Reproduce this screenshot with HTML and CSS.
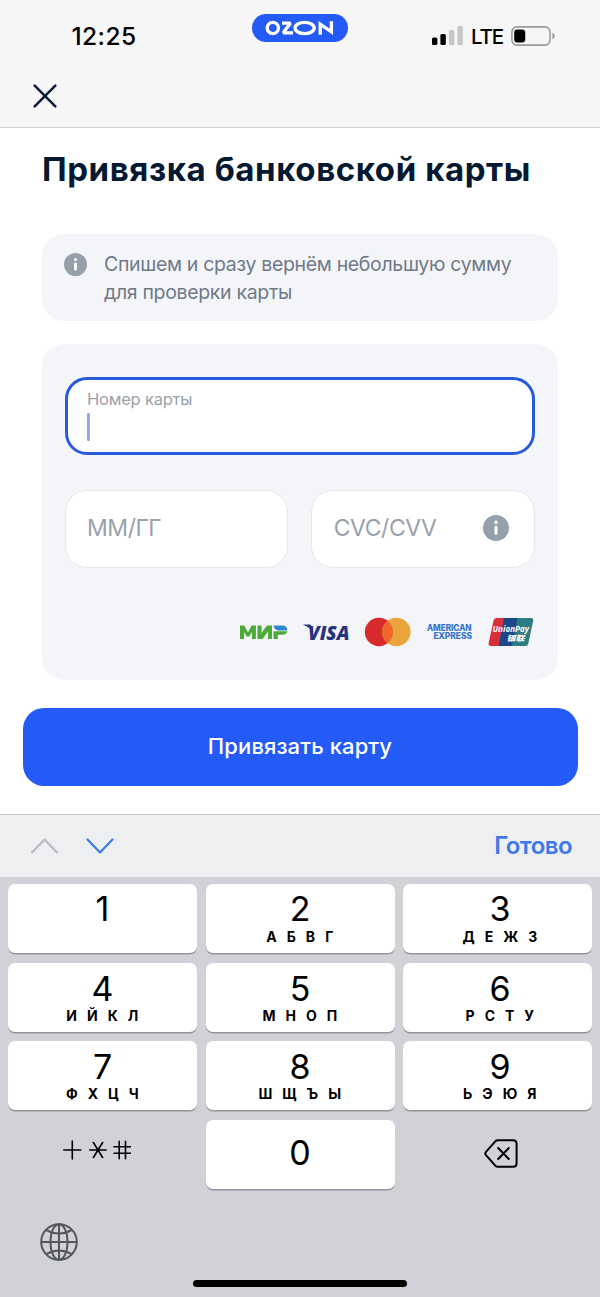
FILE: index.html
```html
<!DOCTYPE html>
<html lang="ru">
<head>
<meta charset="utf-8">
<title>Привязка банковской карты</title>
<link rel="stylesheet" href="styles.css">
</head>
<body>
<div class="screen">
  <header class="header">
    <div class="status">
      <div class="clock">12:25</div>
      <div class="pill">
        <svg width="70" height="16" viewBox="0 0 70 16" aria-label="OZON">
          <g fill="none" stroke="#fff" stroke-width="3.3">
            <circle cx="7.800" cy="8" r="5.6"/>
            <path d="M17 3.200h8.4L18.2 12.8h9.8" stroke-linejoin="bevel"/>
            <ellipse cx="39.6" cy="8" rx="9.6" ry="5.7"/>
            <path d="M55.2 14.8V4.2L66.400 11.800V1.200"/>
          </g>
        </svg>
      </div>
      <div class="indicators">
        <svg class="signal" width="31" height="20" viewBox="0 0 31 20">
          <rect x="0" y="11.5" width="5.4" height="7.5" rx="1.5"/>
          <rect x="8.4" y="8" width="5.4" height="11" rx="1.5"/>
          <rect x="17" y="4" width="5.4" height="15" rx="1.5" fill="#c6c6c6"/>
          <rect x="25.4" y="0" width="5.4" height="19" rx="1.5" fill="#c6c6c6"/>
        </svg>
        <span class="network">LTE</span>
        <svg class="battery" width="44" height="20" viewBox="0 0 44 20">
          <rect x=".9" y=".9" width="38.2" height="18.2" rx="5.2" fill="none" stroke="#9c9c9c" stroke-width="1.6"/>
          <rect x="3.2" y="3.4" width="11" height="13.2" rx="3"/>
          <path d="M41.4 6.8q2.4.8 2.4 3.2t-2.4 3.2z" fill="#9c9c9c"/>
        </svg>
      </div>
    </div>
    <svg class="close" width="24" height="24" viewBox="0 0 24 24"><path d="M1.7 1.7l20.6 20.6M22.3 1.7L1.7 22.3" stroke="#08183a" stroke-width="2.5" stroke-linecap="round"/></svg>
  </header>

  <main class="content">
    <h1 class="title">Привязка банковской карты</h1>
    <section class="notice">
      <svg class="info" width="23" height="23" viewBox="0 0 26 26"><circle cx="13" cy="13" r="13" fill="#979fab"/><circle cx="13" cy="7.3" r="1.7" fill="#fff"/><rect x="11.3" y="10.8" width="3.400" height="9" rx="1.2" fill="#fff"/></svg>
      <p class="notice-text">Спишем и сразу вернём небольшую сумму<br>для проверки карты</p>
    </section>
    <section class="card-form">
      <div class="field field-active">
        <span class="field-label">Номер карты</span>
        <span class="caret"></span>
      </div>
      <div class="field-row">
        <div class="field"><span class="placeholder">ММ/ГГ</span></div>
        <div class="field"><span class="placeholder">CVC/CVV</span>
          <svg width="26" height="26" viewBox="0 0 26 26"><circle cx="13" cy="13" r="13" fill="#979fab"/><circle cx="13" cy="7.3" r="1.7" fill="#fff"/><rect x="11.5" y="10.8" width="3" height="9" rx="1.2" fill="#fff"/></svg>
        </div>
      </div>
      <div class="brands">
        <svg width="48" height="14" viewBox="0 0 48 14" aria-label="МИР">
          <g fill="#4caa37">
            <path d="M0 14V.5h4.2L8 7.3 11.7.5h4.2V14h-4V6.8L9.4 11.5H6.5L4 6.8V14z"/>
            <path d="M17.500 14V.5h4V8L27 .5H32V14h-4V6.5L22.5 14z"/>
            <path d="M33.500 6.2V14h4.300v-4.200h4.600q4 0 5-3.600z"/>
          </g>
          <path d="M33.500.5H42.500q4.500.2 4.700 4.400v.6H38.5Q34.3 5.2 33.500.5z" fill="#2e85d0"/>
        </svg>
        <svg class="brand-text" width="46" height="18" viewBox="0 0 46 18"><text x="5" y="16.500" textLength="41.500" lengthAdjust="spacingAndGlyphs" class="visa">VISA</text><path d="M.5 1.500h6.2q1.5.2 1.9 1.8l1.4 6.4Q6.9 4.1.5 2.1z" fill="#27337e"/></svg>
        <svg width="48" height="30" viewBox="0 0 48 30"><circle cx="15" cy="15" r="14.2" fill="#d92b2b"/><circle cx="32.4" cy="15" r="14.2" fill="#eaa43d"/><path d="M23.7 3.8a14.2 14.2 0 0 1 0 22.4a14.2 14.2 0 0 1 0-22.4z" fill="#f0672c"/></svg>
        <svg width="46" height="18" viewBox="0 0 46 18" class="amex brand-text"><text x="0" y="7.600" textLength="44.500" lengthAdjust="spacingAndGlyphs">AMERICAN</text><text x="6.500" y="16.200" textLength="38.5" lengthAdjust="spacingAndGlyphs">EXPRESS</text></svg>
        <svg class="brand-text" width="46" height="30" viewBox="0 0 46 30">
          <path d="M8.5 1H19l-5.5 28H3Q0 29 .7 26L5.5 3.5Q6.2 1 8.5 1z" fill="#d8303b"/>
          <path d="M24.500 1H43q2.8 0 2.2 2.7L40.3 26.5Q39.7 29 37.2 29H20z" fill="#2c7c80"/>
          <path d="M16 1h13.500L24 29H10.500z" fill="#1d478b"/>
          <text x="4.5" y="14.500" textLength="36.500" lengthAdjust="spacingAndGlyphs" class="union-name">UnionPay</text>
          <text x="18.500" y="24" textLength="18" lengthAdjust="spacingAndGlyphs" class="union-cn">银联</text>
        </svg>
      </div>
    </section>
  </main>
  <div class="action"><button class="submit">Привязать карту</button></div>

  <div class="accessory">
    <svg width="84" height="18" viewBox="0 0 84 18" fill="none" stroke-width="2.2" stroke-linecap="round" stroke-linejoin="round"><path d="M2 15.4L14.5 2.6L27 15.4" stroke="#b9babd"/><path d="M57.5 2.6L70 15.4L82.500 2.6" stroke="#3f78e8"/></svg>
    <span class="done">Готово</span>
  </div>
  <div class="keyboard">
    <div class="keys">
      <div class="key"><b>1</b></div>
      <div class="key"><b>2</b><i>А Б В Г</i></div>
      <div class="key right"><b>3</b><i>Д Е Ж З</i></div>
      <div class="key low"><b>4</b><i>И Й К Л</i></div>
      <div class="key low"><b>5</b><i>М Н О П</i></div>
      <div class="key low right"><b>6</b><i>Р С Т У</i></div>
      <div class="key low"><b>7</b><i>Ф Х Ц Ч</i></div>
      <div class="key low"><b>8</b><i>Ш Щ Ъ Ы</i></div>
      <div class="key low right"><b>9</b><i>Ь Э Ю Я</i></div>
      <div class="key plain symbols"><svg width="68" height="20" viewBox="0 0 68 20" fill="none" stroke="#000" stroke-width="1.6" stroke-linecap="round" aria-label="+*#"><path d="M.8 10h17M9.300 1v18M26.800 10h16.400M30.400 2.500l9.200 15M39.600 2.500l-9.200 15M51 6.800h16.500M51 13.200h16.500M56.200 1.200v17.600M62.500 1.200v17.600"/></svg></div>
      <div class="key zero"><b>0</b></div>
      <div class="key plain erase"><svg width="34" height="29" viewBox="0 0 34 29" fill="none" stroke="#000" stroke-width="2" stroke-linecap="round" stroke-linejoin="round"><path d="M14 1.200H29Q32.600 1.200 32.600 4.700V24.300Q32.600 27.800 29 27.800H14Q12.400 27.800 11.300 26.700L2 16.200Q.600 14.500 2 12.800L11.300 2.300Q12.400 1.200 14 1.200zM14.200 9l10.600 11M24.800 9L14.200 20"/></svg></div>
    </div>
    <svg class="globe" width="38" height="38" viewBox="0 0 38 38" fill="none" stroke="#53555a" stroke-width="2"><circle cx="19" cy="19" r="17.800"/><ellipse cx="19" cy="19" rx="8.600" ry="17.800"/><path d="M19 1.200v35.600M1.200 19h35.600M6 6.900q13 7.400 26 0M6 31.100q13-7.400 26 0"/></svg>
    <div class="home"></div>
  </div>
</div>
</body>
</html>
```
FILE: styles.css
```css
* { box-sizing: border-box; }
body { margin: 0; font-family: Inter, "Liberation Sans", sans-serif; background: #fff; }
svg { display: block; flex: none; }
.screen { width: 600px; height: 1297px; display: flex; flex-direction: column; overflow: hidden; }

.header { height: 128px; background: #f6f6f6; border-bottom: 1px solid #cfd0d1; flex: none; }
.status { height: 84px; display: grid; grid-template-columns: 252px 96px 1fr; align-items: start; }
.clock { padding: 22px 0 0 71.500px; font-size: 24.500px; line-height: 29px; font-weight: 500; letter-spacing: .4px; }
.pill { margin-top: 14px; height: 28px; border-radius: 14px; background: #245af5; display: flex; align-items: center; justify-content: center; }
.indicators { display: flex; align-items: center; padding: 25px 0 0 84px; height: 46px; }
.network { font-size: 20.500px; line-height: 22px; font-weight: 500; margin: 2px 0 0 8px; width: 32px; letter-spacing: -1.200px; }
.battery { margin-left: 8px; }
.close { margin-left: 33px; }

.content { padding: 20px 42px 0; height: 580px; flex: none; }
.title { margin: 0; font-size: 33px; line-height: 42px; font-weight: 700; letter-spacing: .58px; color: #051933; white-space: nowrap; }
.notice { margin-top: 44px; height: 87px; border-radius: 22px; background: #f4f5f9; padding: 16px 22px; display: flex; gap: 17px; }
.info { margin-top: 3px; }
.notice-text { margin: 0; font-size: 19.500px; line-height: 28px; letter-spacing: -.33px; color: #6f7988; white-space: nowrap; }
.card-form { margin-top: 23px; height: 336px; border-radius: 22px; background: #f4f5f9; padding: 33px 23px 0 22.500px; }
.field { height: 78px; border: 1px solid #e6e8eb; border-radius: 22px; background: #fff; padding: 0 25px 2px 21.500px; display: flex; align-items: center; justify-content: space-between; }
.field-active { border: 3px solid #285bdc; padding: 9px 19.500px; flex-direction: column; align-items: flex-start; justify-content: flex-start; }
.field-label { font-size: 16.500px; line-height: 20px; letter-spacing: -.22px; color: #9ba1aa; }
.caret { width: 3px; height: 28px; background: #8aacea; margin-top: 4px; border-radius: 1px; }
.field-row { display: grid; grid-template-columns: 1fr 1fr; gap: 23px; margin-top: 34.500px; }
.placeholder { font-size: 23px; line-height: 28px; letter-spacing: -.45px; color: #9aa1aa; }
.brands { display: flex; align-items: center; justify-content: space-between; margin: 48.500px 1.500px 0 175px; height: 32px; }
.brand-text { overflow: visible; }
.visa { font: italic 800 20px "Open Sans", sans-serif; fill: #27337e; }
.amex text { font: 700 8.500px Inter, sans-serif; fill: #336fcb; stroke: #336fcb; stroke-width: .2px; }
.union-name { font: italic 700 8.500px "Open Sans", sans-serif; fill: #fff; }
.union-cn { font: italic 900 7.500px "Noto Sans CJK SC", sans-serif; fill: #fff; }

.action { padding: 0 22.500px; height: 106px; flex: none; }
.submit { width: 100%; height: 78px; border: 0; border-radius: 21px; background: #245af5; color: #fff; font: 500 22px/28px Inter, sans-serif; letter-spacing: .1px; display: flex; align-items: center; justify-content: center; padding: 0 0 2px; }

.accessory { height: 63px; flex: none; background: #eeeff1; border-top: 1px solid #c6c8ca; padding: 0 28px 0 30px; display: flex; align-items: center; justify-content: space-between; }
.done { font-size: 24px; line-height: 30px; font-weight: 600; letter-spacing: -.55px; color: #3f78e8; }
.keyboard { flex: 1; background: #d1d2d8; padding: 7px 8px 0; }
.keys { display: grid; grid-template-columns: repeat(3, 1fr); grid-auto-rows: 69px; gap: 9.670px 8.500px; }
.key { background: #fff; border-radius: 7px; box-shadow: 0 1.500px 0 #93959a; display: flex; flex-direction: column; align-items: center; padding-top: 5px; }
.key b { font-weight: 400; font-size: 34px; line-height: 40px; }
.key i { font-style: normal; font-weight: 700; font-size: 14px; line-height: 16px; letter-spacing: 3.350px; margin-right: -3px; white-space: nowrap; }
.low { padding-top: 6px; }
.low i { margin-top: -1px; }
.right { padding-left: 5px; }
.zero { padding-top: 13px; }
.plain { background: none; box-shadow: none; }
.symbols { padding: 20px 12px 0 0; }
.erase { padding: 19px 0 0 7px; }
.globe { margin: 34px 0 0 32px; }
.home { width: 214px; height: 7px; border-radius: 4px; background: #000; margin: 19px auto 0; }
```
